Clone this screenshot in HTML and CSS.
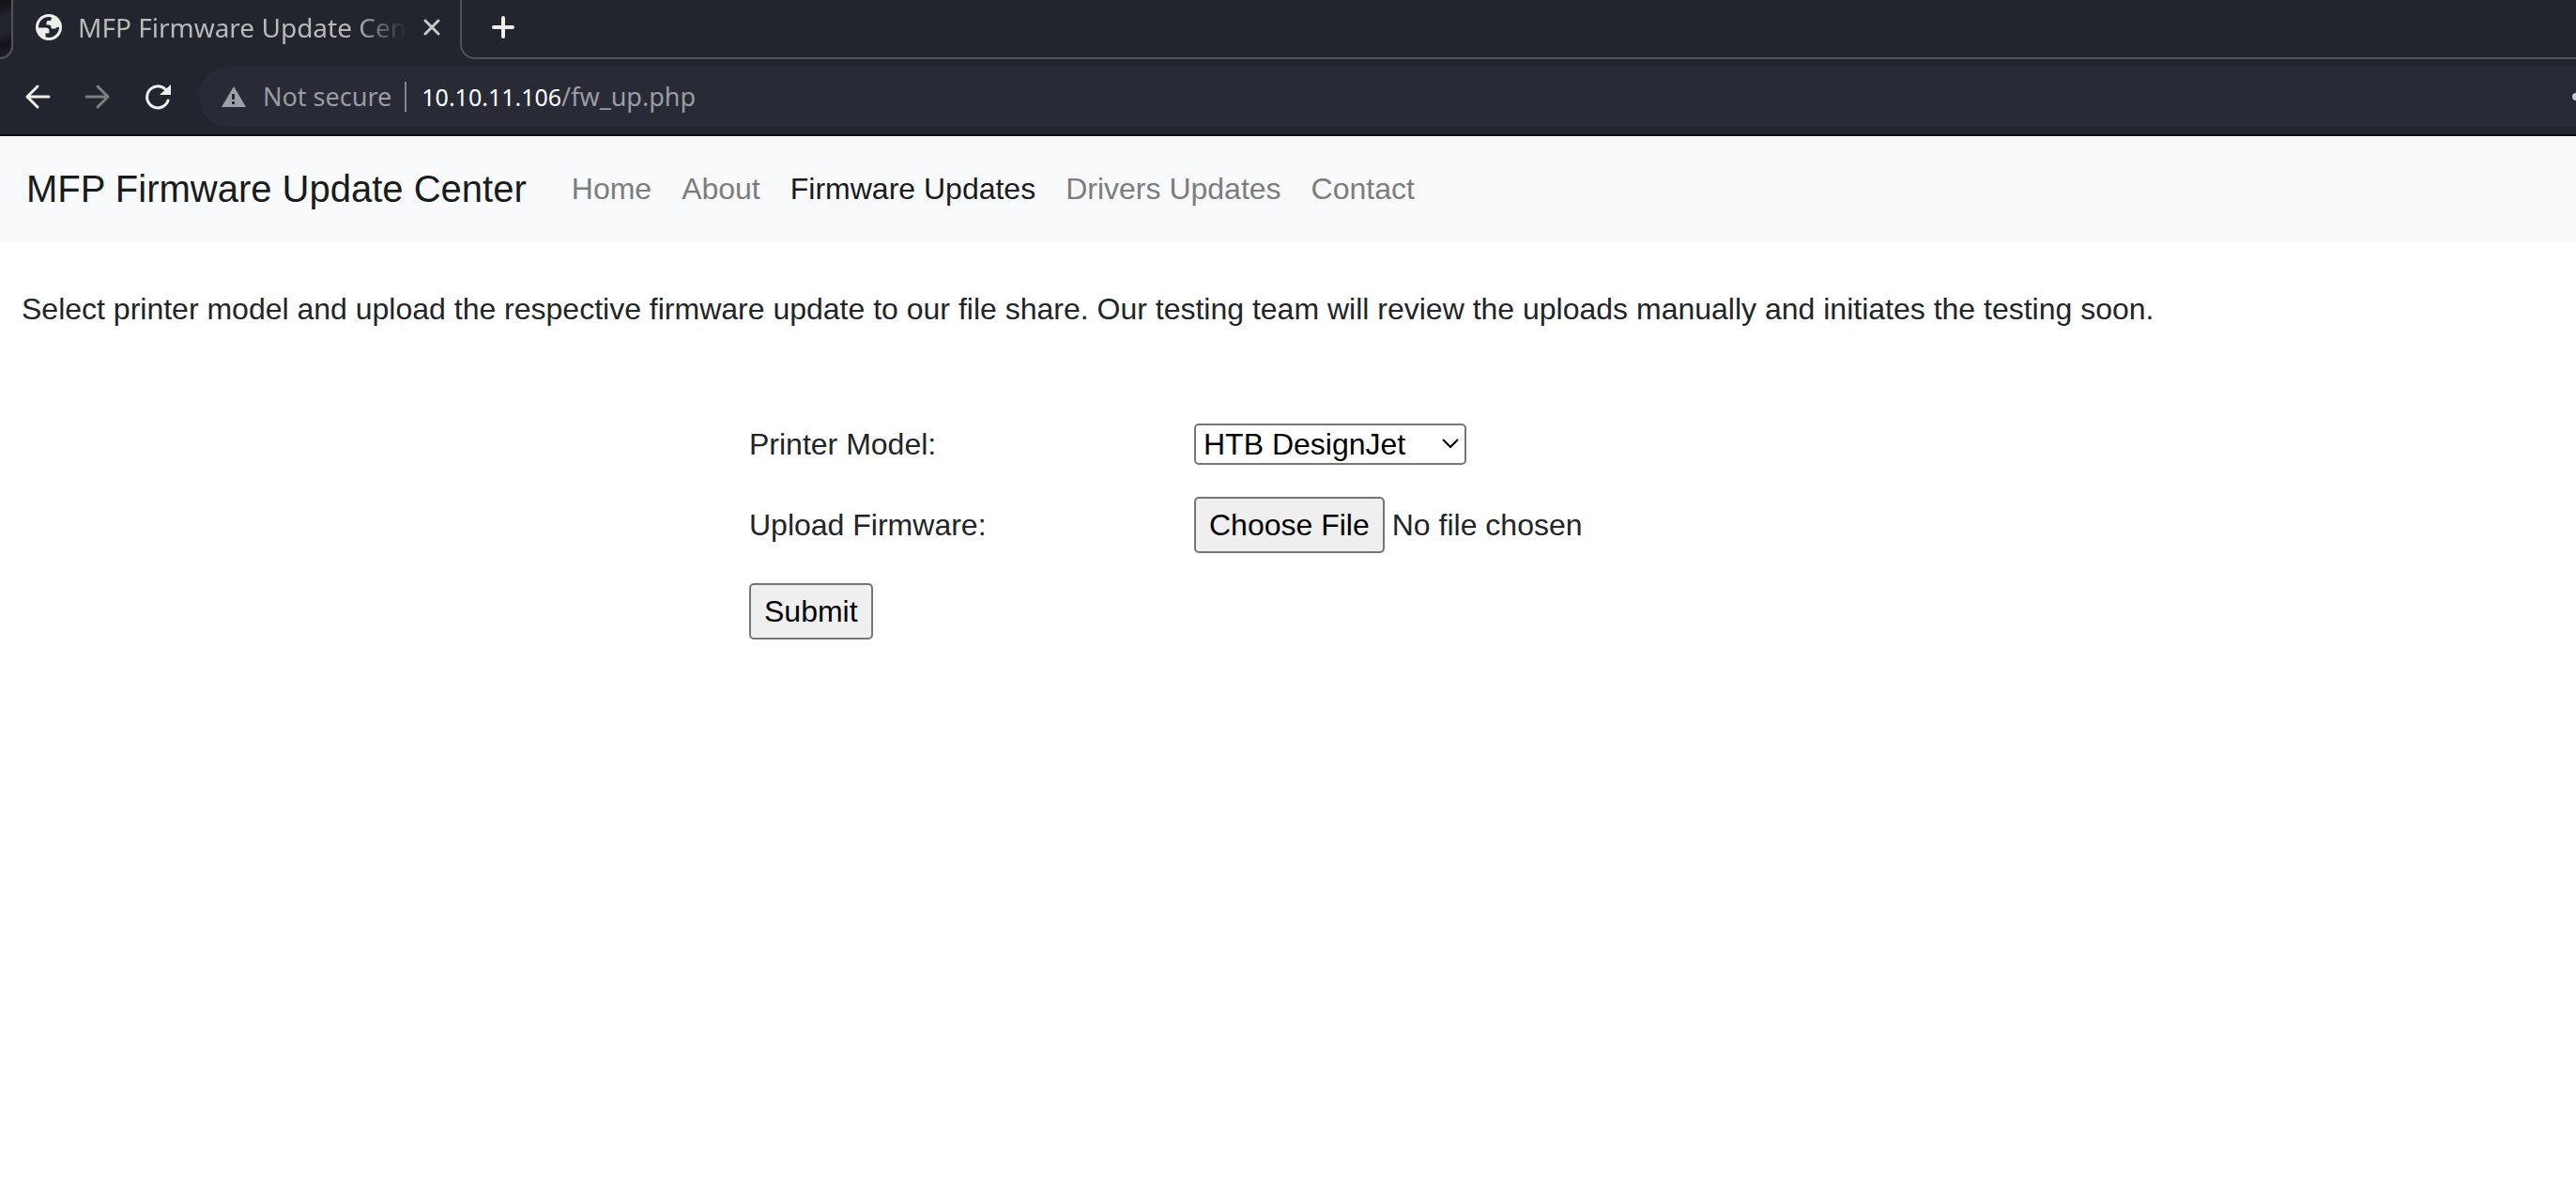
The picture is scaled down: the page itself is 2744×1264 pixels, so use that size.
FILE: index.html
```html
<!DOCTYPE html>
<html lang="en">
<head>
<meta charset="utf-8">
<title>MFP Firmware Update Center</title>
<link rel="stylesheet" href="styles.css">
</head>
<body>
<header class="browser">
  <div class="tabstrip">
    <div class="tab-edge"></div>
    <div class="tab">
      <svg class="favicon" viewBox="0 0 28 28" aria-hidden="true"><circle cx="14" cy="14" r="14" fill="#eeeeec"/><path fill="#23252e" d="M3 14.500C3 8 7 3.500 14 3C16 3 17 3.500 17 4.500L16 7H13.500Q11.500 7 11.500 9V11.500H14Q16.500 11.500 16.500 14V15.500H20Q22 15.500 22.500 14H25C25 20 20 25 14 25L10.500 24.500V20.500H13Q14.500 20.500 14.500 19V17.500Q14 14.500 11 14.500Z"/></svg>
      <span class="tab-title">MFP Firmware Update Center</span>
      <button class="icon-button" type="button" aria-label="Close tab"><svg width="18" height="18" viewBox="0 0 18 18"><path d="M2 2 16 16M16 2 2 16" stroke="#c9c9c7" stroke-width="3" stroke-linecap="round"/></svg></button>
    </div>
    <div class="tab-rest">
      <button class="icon-button" type="button" aria-label="New tab"><svg width="24" height="24" viewBox="0 0 24 24"><path d="M12 2V22M2 12H22" stroke="#eeeeec" stroke-width="4" stroke-linecap="round"/></svg></button>
    </div>
  </div>
  <div class="toolbar">
    <button class="icon-button" type="button" aria-label="Back"><svg width="28" height="28" viewBox="0 0 28 28" fill="none" stroke="#eeeeec" stroke-width="3" stroke-linecap="round" stroke-linejoin="round"><path d="M26 14H3M14 3 3 14 14 25"/></svg></button>
    <button class="icon-button" type="button" aria-label="Forward" disabled><svg width="28" height="28" viewBox="0 0 28 28" fill="none" stroke="#7d7e81" stroke-width="3" stroke-linecap="round" stroke-linejoin="round"><path d="M2 14H25M14 3 25 14 14 25"/></svg></button>
    <button class="icon-button" type="button" aria-label="Reload"><svg width="28" height="28" viewBox="0 0 28 28"><path d="M25 18A11.500 11.500 0 1 1 22 6" fill="none" stroke="#eeeeec" stroke-width="3" stroke-linecap="round"/><path d="M28 1V12H16Z" fill="#eeeeec"/></svg></button>
    <div class="omnibox">
      <svg width="26" height="22" viewBox="0 0 26 22" aria-hidden="true"><path d="M13 0 26 22H0Z" fill="#9aa0a6"/><path d="M11 8h3v6h-3zM11 16h3v3h-3z" fill="#282a36"/></svg>
      <span class="security">Not secure</span>
      <span class="url"><span class="host">10.10.11.106</span>/fw_up.php</span>
      <svg class="share" width="4" height="8" viewBox="0 0 4 8" aria-hidden="true"><circle cx="4" cy="4" r="4" fill="#c9c9c7"/></svg>
    </div>
  </div>
</header>
<nav class="navbar">
  <a class="brand" href="#">MFP Firmware Update Center</a>
  <a class="nav-link" href="#">Home</a>
  <a class="nav-link" href="#">About</a>
  <a class="nav-link active" href="#">Firmware Updates</a>
  <a class="nav-link" href="#">Drivers Updates</a>
  <a class="nav-link" href="#">Contact</a>
</nav>
<main>
  <p class="intro">Select printer model and upload the respective firmware update to our file share. Our testing team will review the uploads manually and initiates the testing soon.</p>
  <form class="upload-form">
    <label for="model">Printer Model:</label>
    <div class="select-wrap">
      <select id="model"><option>HTB DesignJet</option></select>
      <svg class="chevron" width="18" height="12" viewBox="0 0 18 12" aria-hidden="true"><path d="M1 1 9 9 17 1" fill="none" stroke="#000" stroke-width="2"/></svg>
    </div>
    <label for="firmware">Upload Firmware:</label>
    <input id="firmware" type="file">
    <button class="submit" type="submit">Submit</button>
  </form>
</main>
</body>
</html>
```
FILE: styles.css
```css
* { box-sizing: border-box; }
body {
  margin: 0;
  background: #fff;
  color: #212529;
  font: 32px/48px "Liberation Sans", Arial, sans-serif;
}
a { text-decoration: none; }

/* Browser chrome */
.browser {
  background: #23252e;
  border-bottom: 2px solid #08090c;
  font-family: "Noto Sans", sans-serif;
  overflow: hidden;
}
.icon-button {
  display: flex;
  padding: 0;
  border: 0;
  background: none;
}
.tabstrip { display: flex; height: 63px; }
.tab-edge {
  width: 14px;
  border: solid #53535e;
  border-width: 0 2px 2px 0;
  border-bottom-right-radius: 14px;
  background: linear-gradient(160deg, #15161b 10%, #23252e 30%, #23252e 55%, #111216 75%, #23252e);
}
.tab {
  display: flex;
  align-items: center;
  width: 476px;
  padding: 0 21px 5px 24px;
}
.favicon { width: 28px; height: 28px; flex: none; }
.tab-title {
  flex: 1;
  margin: 0 18px 0 17px;
  overflow: hidden;
  color: #b9b9b8;
  font-size: 28px;
  white-space: nowrap;
  -webkit-mask-image: linear-gradient(to right, #000 84%, transparent);
  mask-image: linear-gradient(to right, #000 84%, transparent);
}
.tab-rest {
  display: flex;
  flex: 1;
  align-items: center;
  padding: 0 0 3px 32px;
  border: solid #53535e;
  border-width: 0 0 2px 2px;
  border-bottom-left-radius: 16px;
}
.toolbar {
  display: flex;
  align-items: center;
  gap: 36px;
  padding: 8px 0 8px 26px;
}
.omnibox {
  display: flex;
  flex: 1;
  align-items: center;
  height: 64px;
  margin-left: -6px;
  padding-left: 24px;
  border-radius: 32px 0 0 32px;
  background: #282a36;
  color: #9a9ca3;
  font-size: 27px;
  line-height: 32px;
}
.security {
  margin: 0 16px 0 18px;
  padding-right: 14px;
  border-right: 2px solid #85868d;
}
.host { color: #fff; font-size: 25px; }
.share { margin-left: auto; }

/* Site navigation */
.navbar {
  display: flex;
  align-items: center;
  padding: 26px 28px;
  background: #f8f9fa;
}
.brand {
  margin-right: 32px;
  color: #1a1b1c;
  font-size: 40px;
  line-height: 60px;
}
.nav-link { padding: 0 16px; color: #7c7d7d; }
.nav-link.active { color: #1a1b1c; }

/* Upload form */
.intro { margin: 48px 23px 96px; }
.upload-form {
  display: grid;
  grid-template-columns: 474px 1fr;
  align-items: center;
  justify-items: start;
  row-gap: 32px;
  width: 1148px;
  max-width: 100%;
  margin: 0 auto;
}
.select-wrap { display: flex; position: relative; width: 290px; }
select {
  width: 100%;
  height: 44px;
  padding: 0 8px;
  border: 2px solid #767676;
  border-radius: 5px;
  background: #fff;
  color: #000;
  font: 32px/40px "Liberation Sans", Arial, sans-serif;
  appearance: none;
}
.chevron { position: absolute; right: 8px; top: 16px; }
input[type="file"] {
  color: #212529;
  font: 32px/48px "Liberation Sans", Arial, sans-serif;
}
input::file-selector-button,
.submit {
  height: 60px;
  margin: 0;
  padding: 0 14px;
  border: 2px solid #767676;
  border-radius: 5px;
  background: #efefef;
  color: #000;
  font: 32px/48px "Liberation Sans", Arial, sans-serif;
}
input::file-selector-button { margin-right: 8px; }
```
